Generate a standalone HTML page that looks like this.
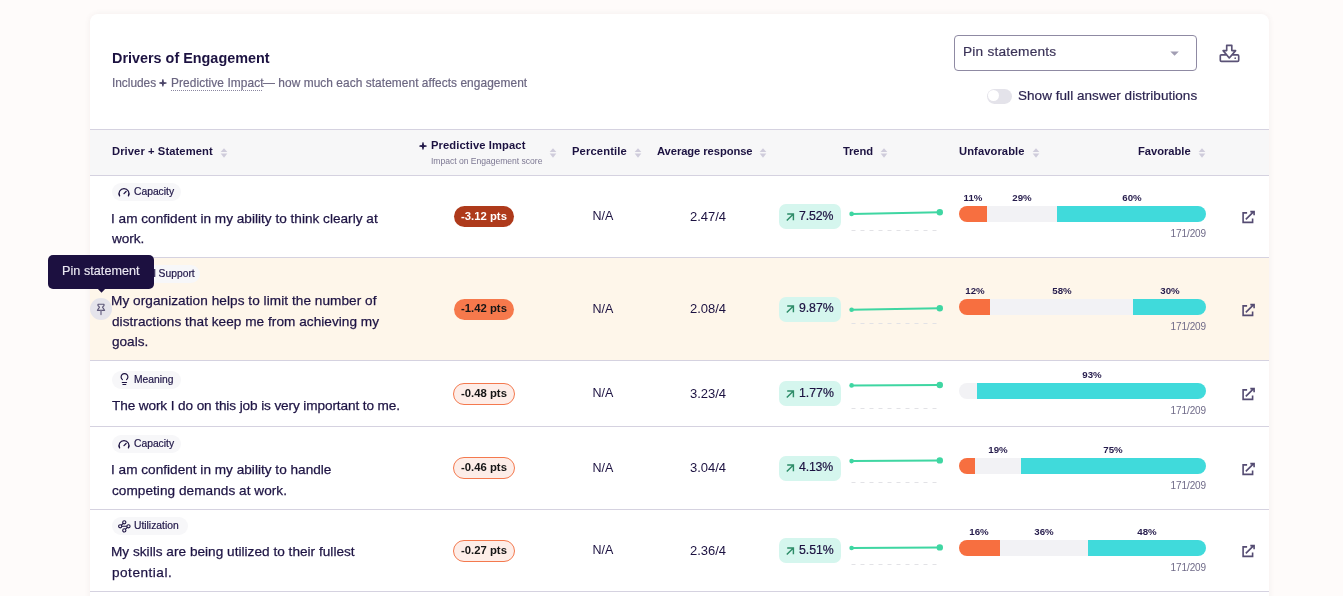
<!DOCTYPE html>
<html><head><meta charset="utf-8"><style>
html,body{margin:0;padding:0;}
body{width:1343px;height:596px;overflow:hidden;background:#fefbfa;position:relative;font-family:"Liberation Sans", sans-serif;}
.t{position:absolute;white-space:nowrap;line-height:1;will-change:transform;}
</style></head><body>
<div style="position:absolute;left:90px;top:14px;width:1179px;height:620px;background:#fff;border-radius:8px;box-shadow:0 0 5px 1px rgba(120,90,80,0.06);"></div>
<div class="t" style="left:111.70px;top:51.31px;font-size:14.4px;font-weight:700;color:#1c1241;letter-spacing:0.001px;">Drivers of Engagement</div>
<div class="t" style="left:111.59px;top:77.93px;font-size:11.9px;font-weight:400;color:#6b6681;letter-spacing:-0.022px;-webkit-text-stroke:0.2px #6b6681;">Includes</div>
<svg style="position:absolute;left:159px;top:79.2px" width="7.8" height="7.8" viewBox="0 0 10 10"><path d="M5 0 C5.8 0 6.1 2.6 6.3 3.7 C7.4 3.9 10 4.2 10 5 C10 5.8 7.4 6.1 6.3 6.3 C6.1 7.4 5.8 10 5 10 C4.2 10 3.9 7.4 3.7 6.3 C2.6 6.1 0 5.8 0 5 C0 4.2 2.6 3.9 3.7 3.7 C3.9 2.6 4.2 0 5 0Z" fill="#4b4468"/></svg>
<div class="t" style="left:170.50px;top:77.93px;font-size:11.9px;font-weight:400;color:#6b6681;letter-spacing:0.083px;-webkit-text-stroke:0.2px #6b6681;">Predictive Impact</div>
<div style="position:absolute;left:171px;top:89.5px;width:91px;height:0;border-top:1px dotted #8a86a0;"></div>
<div class="t" style="left:263.04px;top:77.93px;font-size:11.9px;font-weight:400;color:#6b6681;letter-spacing:0.060px;-webkit-text-stroke:0.2px #6b6681;">— how much each statement affects engagement</div>
<div style="position:absolute;left:954px;top:35px;width:241px;height:34px;border:1px solid #8f8aa3;border-radius:4px;background:#fff;"></div>
<div class="t" style="left:963.35px;top:44.90px;font-size:13.7px;font-weight:400;color:#3b3358;letter-spacing:0.206px;-webkit-text-stroke:0.2px #3b3358;">Pin statements</div>
<svg style="position:absolute;left:1170px;top:51px" width="10" height="6" viewBox="0 0 10 6"><path d="M0.3 0.5H8.8L4.55 4.8Z" fill="#a29eb3"/></svg>
<svg style="position:absolute;left:1219px;top:44px" width="21" height="19" viewBox="0 0 21 19"><path d="M7.7 1.3H12.8V6.6H16.6L10.3 14L4.1 6.6H7.7Z" fill="none" stroke="#5a5276" stroke-width="1.65" stroke-linejoin="round"/><path d="M7.3 10.9H2.4Q1.3 10.9 1.3 12V16.3Q1.3 17.4 2.4 17.4H18.6Q19.7 17.4 19.7 16.3V12Q19.7 10.9 18.6 10.9H13.3" fill="none" stroke="#5a5276" stroke-width="1.65" stroke-linejoin="round"/><circle cx="16.2" cy="14.2" r="0.85" fill="#5a5276"/></svg>
<div style="position:absolute;left:987px;top:89px;width:25px;height:14.8px;border-radius:7.4px;background:#e4e3ea;"></div>
<div style="position:absolute;left:987.8px;top:90px;width:11.4px;height:11.4px;border-radius:6px;background:#fff;"></div>
<div class="t" style="left:1018.29px;top:89.07px;font-size:13.5px;font-weight:400;color:#2c2450;letter-spacing:0.046px;-webkit-text-stroke:0.2px #2c2450;">Show full answer distributions</div>
<div style="position:absolute;left:90px;top:129px;width:1179px;height:1px;background:#d5d2e0;"></div>
<div style="position:absolute;left:90px;top:130px;width:1179px;height:45px;background:#f7f7f8;"></div>
<div style="position:absolute;left:90px;top:175px;width:1179px;height:1px;background:#d5d2e0;"></div>
<div class="t" style="left:111.65px;top:145.72px;font-size:11.2px;font-weight:700;color:#1c1241;letter-spacing:0.087px;">Driver + Statement</div>
<svg style="position:absolute;left:220px;top:148px" width="8" height="10" viewBox="0 0 8 10"><path d="M4 0.2L7.3 4H0.7Z" fill="#cfccdb"/><path d="M4 9.8L7.3 5.4H0.7Z" fill="#cfccdb"/></svg>
<svg style="position:absolute;left:419px;top:142px" width="8" height="8" viewBox="0 0 10 10"><path d="M5 0 C5.8 0 6.1 2.6 6.3 3.7 C7.4 3.9 10 4.2 10 5 C10 5.8 7.4 6.1 6.3 6.3 C6.1 7.4 5.8 10 5 10 C4.2 10 3.9 7.4 3.7 6.3 C2.6 6.1 0 5.8 0 5 C0 4.2 2.6 3.9 3.7 3.7 C3.9 2.6 4.2 0 5 0Z" fill="#241b4b"/></svg>
<div class="t" style="left:430.65px;top:139.82px;font-size:11.2px;font-weight:700;color:#1c1241;letter-spacing:0.109px;">Predictive Impact</div>
<div class="t" style="left:430.60px;top:156.72px;font-size:8.6px;font-weight:400;color:#7d7893;letter-spacing:-0.034px;">Impact on Engagement score</div>
<svg style="position:absolute;left:549px;top:148px" width="8" height="10" viewBox="0 0 8 10"><path d="M4 0.2L7.3 4H0.7Z" fill="#cfccdb"/><path d="M4 9.8L7.3 5.4H0.7Z" fill="#cfccdb"/></svg>
<div class="t" style="left:571.75px;top:145.72px;font-size:11.2px;font-weight:700;color:#1c1241;letter-spacing:0.140px;">Percentile</div>
<svg style="position:absolute;left:634px;top:148px" width="8" height="10" viewBox="0 0 8 10"><path d="M4 0.2L7.3 4H0.7Z" fill="#cfccdb"/><path d="M4 9.8L7.3 5.4H0.7Z" fill="#cfccdb"/></svg>
<div class="t" style="left:656.53px;top:145.72px;font-size:11.2px;font-weight:700;color:#1c1241;letter-spacing:-0.068px;">Average response</div>
<svg style="position:absolute;left:759px;top:148px" width="8" height="10" viewBox="0 0 8 10"><path d="M4 0.2L7.3 4H0.7Z" fill="#cfccdb"/><path d="M4 9.8L7.3 5.4H0.7Z" fill="#cfccdb"/></svg>
<div class="t" style="left:843.05px;top:145.72px;font-size:11.2px;font-weight:700;color:#1c1241;letter-spacing:-0.111px;">Trend</div>
<svg style="position:absolute;left:880px;top:148px" width="8" height="10" viewBox="0 0 8 10"><path d="M4 0.2L7.3 4H0.7Z" fill="#cfccdb"/><path d="M4 9.8L7.3 5.4H0.7Z" fill="#cfccdb"/></svg>
<div class="t" style="left:958.83px;top:145.72px;font-size:11.2px;font-weight:700;color:#1c1241;letter-spacing:0.080px;">Unfavorable</div>
<svg style="position:absolute;left:1032px;top:148px" width="8" height="10" viewBox="0 0 8 10"><path d="M4 0.2L7.3 4H0.7Z" fill="#cfccdb"/><path d="M4 9.8L7.3 5.4H0.7Z" fill="#cfccdb"/></svg>
<div class="t" style="left:1138.25px;top:145.72px;font-size:11.2px;font-weight:700;color:#1c1241;letter-spacing:-0.021px;">Favorable</div>
<svg style="position:absolute;left:1198px;top:148px" width="8" height="10" viewBox="0 0 8 10"><path d="M4 0.2L7.3 4H0.7Z" fill="#cfccdb"/><path d="M4 9.8L7.3 5.4H0.7Z" fill="#cfccdb"/></svg>
<div style="position:absolute;left:90px;top:257px;width:1179px;height:1px;background:#d5d2e0;"></div>
<div style="position:absolute;left:112px;top:183px;width:69px;height:18px;border-radius:9px;background:#f7f7f9;"></div>
<svg style="position:absolute;left:117.4px;top:186.5px" width="14" height="12" viewBox="0 0 14 12"><path d="M2.6 8.9A5 5 0 1 1 11.4 8.9" fill="none" stroke="#1c1241" stroke-width="1.25" stroke-linecap="round"/><path d="M7 6.6L9.1 4.5" stroke="#1c1241" stroke-width="1.25" stroke-linecap="round"/></svg>
<div class="t" style="left:134.34px;top:187.48px;font-size:10.3px;font-weight:400;color:#201748;-webkit-text-stroke:0.2px #201748;">Capacity</div>
<div class="t" style="left:111.23px;top:212.29px;font-size:13.6px;font-weight:400;color:#1e1444;letter-spacing:0.015px;-webkit-text-stroke:0.25px #1e1444;">I am confident in my ability to think clearly at</div>
<div class="t" style="left:112.37px;top:232.39px;font-size:13.6px;font-weight:400;color:#1e1444;letter-spacing:-0.060px;-webkit-text-stroke:0.25px #1e1444;">work.</div>
<div style="position:absolute;left:454px;top:206.0px;width:60px;height:21px;border-radius:11px;background:#ae3a1b;"></div>
<div class="t" style="left:334.00px;width:300px;text-align:center;top:210.63px;font-size:11.3px;font-weight:700;color:#fff;">-3.12 pts</div>
<div class="t" style="left:453.00px;width:300px;text-align:center;top:210.42px;font-size:12.5px;font-weight:400;color:#1c1241;">N/A</div>
<div class="t" style="left:557.50px;width:300px;text-align:center;top:209.50px;font-size:13px;font-weight:400;color:#1c1241;">2.47/4</div>
<div style="position:absolute;left:779px;top:204.0px;width:62px;height:25px;border-radius:7px;background:#d5f6ee;"></div>
<svg style="position:absolute;left:785px;top:211.5px" width="10" height="10" viewBox="0 0 10 10"><path d="M1.8 8.6L8.4 2M2.2 2H8.4V8.2" fill="none" stroke="#2d8c68" stroke-width="1.45"/></svg>
<div class="t" style="left:798.87px;top:209.69px;font-size:12.3px;font-weight:400;color:#1c1241;letter-spacing:-0.079px;-webkit-text-stroke:0.2px #1c1241;">7.52%</div>
<svg style="position:absolute;left:845px;top:200px" width="100" height="34" viewBox="0 0 100 34"><line x1="6.5" y1="30.5" x2="93" y2="30.5" stroke="#e2e2e6" stroke-width="1" stroke-dasharray="4 5"/><line x1="6.6" y1="13.900000000000006" x2="94.8" y2="12.300000000000011" stroke="#3fd6a2" stroke-width="2"/><circle cx="6.6" cy="13.900000000000006" r="2.3" fill="#3fd6a2"/><circle cx="94.8" cy="12.300000000000011" r="3.2" fill="#3fd6a2"/></svg>
<div style="position:absolute;left:959px;top:206px;width:247px;height:16px;border-radius:8px;overflow:hidden;"><div style="position:absolute;left:0;top:0;width:28px;height:16px;background:#f76f40"></div><div style="position:absolute;left:28px;top:0;width:70px;height:16px;background:#f2f2f5"></div><div style="position:absolute;left:98px;top:0;width:149px;height:16px;background:#40dadb"></div></div>
<div class="t" style="left:823.00px;width:300px;text-align:center;top:192.79px;font-size:9.7px;font-weight:700;color:#261c4c;">11%</div>
<div class="t" style="left:872.00px;width:300px;text-align:center;top:192.79px;font-size:9.7px;font-weight:700;color:#261c4c;">29%</div>
<div class="t" style="left:981.50px;width:300px;text-align:center;top:192.79px;font-size:9.7px;font-weight:700;color:#261c4c;">60%</div>
<div class="t" style="left:905.60px;width:300px;text-align:right;top:228.84px;font-size:10px;font-weight:400;color:#6f6a88;letter-spacing:-0.104px;">171/209</div>
<svg style="position:absolute;left:1241px;top:210.0px" width="15" height="15" viewBox="0 0 15 15"><path d="M6.1 2.9H2.1V12.4H11.6V8.6" fill="none" stroke="#544b72" stroke-width="1.6"/><path d="M4.8 9.4L12.4 1.9M9.3 1.6H13.1V5.3" fill="none" stroke="#544b72" stroke-width="1.6"/></svg>
<div style="position:absolute;left:90px;top:258px;width:1179px;height:102px;background:#fef6ea;"></div>
<div style="position:absolute;left:90px;top:360px;width:1179px;height:1px;background:#d5d2e0;"></div>
<div style="position:absolute;left:112px;top:265px;width:88px;height:18px;border-radius:9px;background:#f7f7f9;"></div>
<svg style="position:absolute;left:117.4px;top:268.5px" width="14" height="12" viewBox="0 0 14 12"><path d="M2.6 8.9A5 5 0 1 1 11.4 8.9" fill="none" stroke="#1c1241" stroke-width="1.25" stroke-linecap="round"/><path d="M7 6.6L9.1 4.5" stroke="#1c1241" stroke-width="1.25" stroke-linecap="round"/></svg>
<div class="t" style="left:134.34px;top:269.48px;font-size:10.3px;font-weight:400;color:#201748;-webkit-text-stroke:0.2px #201748;">Goal Support</div>
<div class="t" style="left:111.37px;top:294.49px;font-size:13.6px;font-weight:400;color:#1e1444;letter-spacing:0.060px;-webkit-text-stroke:0.25px #1e1444;">My organization helps to limit the number of</div>
<div class="t" style="left:111.88px;top:314.59px;font-size:13.6px;font-weight:400;color:#1e1444;letter-spacing:0.044px;-webkit-text-stroke:0.25px #1e1444;">distractions that keep me from achieving my</div>
<div class="t" style="left:111.89px;top:334.69px;font-size:13.6px;font-weight:400;color:#1e1444;letter-spacing:0.002px;-webkit-text-stroke:0.25px #1e1444;">goals.</div>
<div style="position:absolute;left:454px;top:298.5px;width:60px;height:21px;border-radius:11px;background:#f6794c;"></div>
<div class="t" style="left:334.00px;width:300px;text-align:center;top:303.13px;font-size:11.3px;font-weight:700;color:#161616;">-1.42 pts</div>
<div class="t" style="left:453.00px;width:300px;text-align:center;top:302.92px;font-size:12.5px;font-weight:400;color:#1c1241;">N/A</div>
<div class="t" style="left:557.50px;width:300px;text-align:center;top:302.00px;font-size:13px;font-weight:400;color:#1c1241;">2.08/4</div>
<div style="position:absolute;left:779px;top:296.5px;width:62px;height:25px;border-radius:7px;background:#d5f6ee;"></div>
<svg style="position:absolute;left:785px;top:304.0px" width="10" height="10" viewBox="0 0 10 10"><path d="M1.8 8.6L8.4 2M2.2 2H8.4V8.2" fill="none" stroke="#2d8c68" stroke-width="1.45"/></svg>
<div class="t" style="left:798.85px;top:302.19px;font-size:12.3px;font-weight:400;color:#1c1241;letter-spacing:-0.072px;-webkit-text-stroke:0.2px #1c1241;">9.87%</div>
<svg style="position:absolute;left:845px;top:293px" width="100" height="34" viewBox="0 0 100 34"><line x1="6.5" y1="30.5" x2="93" y2="30.5" stroke="#e2e2e6" stroke-width="1" stroke-dasharray="4 5"/><line x1="6.6" y1="16.80000000000001" x2="94.8" y2="15.199999999999989" stroke="#3fd6a2" stroke-width="2"/><circle cx="6.6" cy="16.80000000000001" r="2.3" fill="#3fd6a2"/><circle cx="94.8" cy="15.199999999999989" r="3.2" fill="#3fd6a2"/></svg>
<div style="position:absolute;left:959px;top:299px;width:247px;height:16px;border-radius:8px;overflow:hidden;"><div style="position:absolute;left:0;top:0;width:31px;height:16px;background:#f76f40"></div><div style="position:absolute;left:31px;top:0;width:143px;height:16px;background:#f2f2f5"></div><div style="position:absolute;left:174px;top:0;width:73px;height:16px;background:#40dadb"></div></div>
<div class="t" style="left:824.50px;width:300px;text-align:center;top:285.79px;font-size:9.7px;font-weight:700;color:#261c4c;">12%</div>
<div class="t" style="left:911.50px;width:300px;text-align:center;top:285.79px;font-size:9.7px;font-weight:700;color:#261c4c;">58%</div>
<div class="t" style="left:1019.50px;width:300px;text-align:center;top:285.79px;font-size:9.7px;font-weight:700;color:#261c4c;">30%</div>
<div class="t" style="left:905.60px;width:300px;text-align:right;top:321.84px;font-size:10px;font-weight:400;color:#6f6a88;letter-spacing:-0.104px;">171/209</div>
<svg style="position:absolute;left:1241px;top:302.5px" width="15" height="15" viewBox="0 0 15 15"><path d="M6.1 2.9H2.1V12.4H11.6V8.6" fill="none" stroke="#544b72" stroke-width="1.6"/><path d="M4.8 9.4L12.4 1.9M9.3 1.6H13.1V5.3" fill="none" stroke="#544b72" stroke-width="1.6"/></svg>
<div style="position:absolute;left:90px;top:426px;width:1179px;height:1px;background:#d5d2e0;"></div>
<div style="position:absolute;left:112px;top:371px;width:69px;height:18px;border-radius:9px;background:#f7f7f9;"></div>
<svg style="position:absolute;left:119px;top:371px" width="11" height="16" viewBox="0 0 11 16"><path d="M3.4 8.6A3.4 3.4 0 1 1 7.6 8.6" fill="none" stroke="#1c1241" stroke-width="1.2" stroke-linecap="round"/><path d="M3.3 11.5H7.5M3.9 13.5H6.8" stroke="#1c1241" stroke-width="1.2" stroke-linecap="round"/></svg>
<div class="t" style="left:134.06px;top:375.48px;font-size:10.3px;font-weight:400;color:#201748;-webkit-text-stroke:0.2px #201748;">Meaning</div>
<div class="t" style="left:112.17px;top:399.29px;font-size:13.6px;font-weight:400;color:#1e1444;letter-spacing:-0.105px;-webkit-text-stroke:0.25px #1e1444;">The work I do on this job is very important to me.</div>
<div style="position:absolute;left:453px;top:382.5px;width:60px;height:20px;border-radius:11px;background:#fdede8;border:1px solid #f4794e;"></div>
<div class="t" style="left:334.00px;width:300px;text-align:center;top:387.63px;font-size:11.3px;font-weight:700;color:#161616;">-0.48 pts</div>
<div class="t" style="left:453.00px;width:300px;text-align:center;top:387.42px;font-size:12.5px;font-weight:400;color:#1c1241;">N/A</div>
<div class="t" style="left:557.50px;width:300px;text-align:center;top:386.50px;font-size:13px;font-weight:400;color:#1c1241;">3.23/4</div>
<div style="position:absolute;left:779px;top:381.0px;width:62px;height:25px;border-radius:7px;background:#d5f6ee;"></div>
<svg style="position:absolute;left:785px;top:388.5px" width="10" height="10" viewBox="0 0 10 10"><path d="M1.8 8.6L8.4 2M2.2 2H8.4V8.2" fill="none" stroke="#2d8c68" stroke-width="1.45"/></svg>
<div class="t" style="left:798.56px;top:386.69px;font-size:12.3px;font-weight:400;color:#1c1241;letter-spacing:-0.001px;-webkit-text-stroke:0.2px #1c1241;">1.77%</div>
<svg style="position:absolute;left:845px;top:378px" width="100" height="34" viewBox="0 0 100 34"><line x1="6.5" y1="30.5" x2="93" y2="30.5" stroke="#e2e2e6" stroke-width="1" stroke-dasharray="4 5"/><line x1="6.6" y1="7.399999999999977" x2="94.8" y2="7.0" stroke="#3fd6a2" stroke-width="2"/><circle cx="6.6" cy="7.399999999999977" r="2.3" fill="#3fd6a2"/><circle cx="94.8" cy="7.0" r="3.2" fill="#3fd6a2"/></svg>
<div style="position:absolute;left:959px;top:383px;width:247px;height:16px;border-radius:8px;overflow:hidden;"><div style="position:absolute;left:0;top:0;width:0px;height:16px;background:#f76f40"></div><div style="position:absolute;left:0px;top:0;width:18px;height:16px;background:#f2f2f5"></div><div style="position:absolute;left:18px;top:0;width:229px;height:16px;background:#40dadb"></div></div>
<div class="t" style="left:941.50px;width:300px;text-align:center;top:369.79px;font-size:9.7px;font-weight:700;color:#261c4c;">93%</div>
<div class="t" style="left:905.60px;width:300px;text-align:right;top:405.84px;font-size:10px;font-weight:400;color:#6f6a88;letter-spacing:-0.104px;">171/209</div>
<svg style="position:absolute;left:1241px;top:387.0px" width="15" height="15" viewBox="0 0 15 15"><path d="M6.1 2.9H2.1V12.4H11.6V8.6" fill="none" stroke="#544b72" stroke-width="1.6"/><path d="M4.8 9.4L12.4 1.9M9.3 1.6H13.1V5.3" fill="none" stroke="#544b72" stroke-width="1.6"/></svg>
<div style="position:absolute;left:90px;top:509px;width:1179px;height:1px;background:#d5d2e0;"></div>
<div style="position:absolute;left:112px;top:435px;width:69px;height:18px;border-radius:9px;background:#f7f7f9;"></div>
<svg style="position:absolute;left:117.4px;top:438.5px" width="14" height="12" viewBox="0 0 14 12"><path d="M2.6 8.9A5 5 0 1 1 11.4 8.9" fill="none" stroke="#1c1241" stroke-width="1.25" stroke-linecap="round"/><path d="M7 6.6L9.1 4.5" stroke="#1c1241" stroke-width="1.25" stroke-linecap="round"/></svg>
<div class="t" style="left:134.34px;top:439.48px;font-size:10.3px;font-weight:400;color:#201748;-webkit-text-stroke:0.2px #201748;">Capacity</div>
<div class="t" style="left:111.23px;top:463.29px;font-size:13.6px;font-weight:400;color:#1e1444;letter-spacing:0.014px;-webkit-text-stroke:0.25px #1e1444;">I am confident in my ability to handle</div>
<div class="t" style="left:111.88px;top:484.09px;font-size:13.6px;font-weight:400;color:#1e1444;letter-spacing:0.048px;-webkit-text-stroke:0.25px #1e1444;">competing demands at work.</div>
<div style="position:absolute;left:453px;top:457.0px;width:60px;height:20px;border-radius:11px;background:#fdede8;border:1px solid #f4794e;"></div>
<div class="t" style="left:334.00px;width:300px;text-align:center;top:462.13px;font-size:11.3px;font-weight:700;color:#161616;">-0.46 pts</div>
<div class="t" style="left:453.00px;width:300px;text-align:center;top:461.92px;font-size:12.5px;font-weight:400;color:#1c1241;">N/A</div>
<div class="t" style="left:557.50px;width:300px;text-align:center;top:461.00px;font-size:13px;font-weight:400;color:#1c1241;">3.04/4</div>
<div style="position:absolute;left:779px;top:455.5px;width:62px;height:25px;border-radius:7px;background:#d5f6ee;"></div>
<svg style="position:absolute;left:785px;top:463.0px" width="10" height="10" viewBox="0 0 10 10"><path d="M1.8 8.6L8.4 2M2.2 2H8.4V8.2" fill="none" stroke="#2d8c68" stroke-width="1.45"/></svg>
<div class="t" style="left:799.20px;top:461.19px;font-size:12.3px;font-weight:400;color:#1c1241;letter-spacing:-0.161px;-webkit-text-stroke:0.2px #1c1241;">4.13%</div>
<svg style="position:absolute;left:845px;top:452px" width="100" height="34" viewBox="0 0 100 34"><line x1="6.5" y1="30.5" x2="93" y2="30.5" stroke="#e2e2e6" stroke-width="1" stroke-dasharray="4 5"/><line x1="6.6" y1="9.100000000000023" x2="94.8" y2="8.399999999999977" stroke="#3fd6a2" stroke-width="2"/><circle cx="6.6" cy="9.100000000000023" r="2.3" fill="#3fd6a2"/><circle cx="94.8" cy="8.399999999999977" r="3.2" fill="#3fd6a2"/></svg>
<div style="position:absolute;left:959px;top:458px;width:247px;height:16px;border-radius:8px;overflow:hidden;"><div style="position:absolute;left:0;top:0;width:16px;height:16px;background:#f76f40"></div><div style="position:absolute;left:16px;top:0;width:45.60000000000002px;height:16px;background:#f2f2f5"></div><div style="position:absolute;left:61.60000000000002px;top:0;width:185.39999999999998px;height:16px;background:#40dadb"></div></div>
<div class="t" style="left:847.80px;width:300px;text-align:center;top:444.79px;font-size:9.7px;font-weight:700;color:#261c4c;">19%</div>
<div class="t" style="left:963.30px;width:300px;text-align:center;top:444.79px;font-size:9.7px;font-weight:700;color:#261c4c;">75%</div>
<div class="t" style="left:905.60px;width:300px;text-align:right;top:480.84px;font-size:10px;font-weight:400;color:#6f6a88;letter-spacing:-0.104px;">171/209</div>
<svg style="position:absolute;left:1241px;top:461.5px" width="15" height="15" viewBox="0 0 15 15"><path d="M6.1 2.9H2.1V12.4H11.6V8.6" fill="none" stroke="#544b72" stroke-width="1.6"/><path d="M4.8 9.4L12.4 1.9M9.3 1.6H13.1V5.3" fill="none" stroke="#544b72" stroke-width="1.6"/></svg>
<div style="position:absolute;left:90px;top:591px;width:1179px;height:1px;background:#d5d2e0;"></div>
<div style="position:absolute;left:112px;top:517px;width:76px;height:18px;border-radius:9px;background:#f7f7f9;"></div>
<svg style="position:absolute;left:116px;top:518px" width="16" height="16" viewBox="0 0 16 16"><circle cx="8.3" cy="4.3" r="1.6" fill="none" stroke="#1c1241" stroke-width="1.1"/><circle cx="4.2" cy="8.3" r="1.6" fill="none" stroke="#1c1241" stroke-width="1.1"/><circle cx="12.5" cy="8.3" r="1.6" fill="none" stroke="#1c1241" stroke-width="1.1"/><circle cx="8.3" cy="12.4" r="1.6" fill="none" stroke="#1c1241" stroke-width="1.1"/><path d="M7.1 5.5L5.4 7.1M5.8 8.3H10.9M11.3 9.5L9.5 11.2" stroke="#1c1241" stroke-width="1.1"/></svg>
<div class="t" style="left:134.10px;top:521.48px;font-size:10.3px;font-weight:400;color:#201748;-webkit-text-stroke:0.2px #201748;">Utilization</div>
<div class="t" style="left:111.37px;top:545.29px;font-size:13.6px;font-weight:400;color:#1e1444;letter-spacing:0.025px;-webkit-text-stroke:0.25px #1e1444;">My skills are being utilized to their fullest</div>
<div class="t" style="left:111.59px;top:566.09px;font-size:13.6px;font-weight:400;color:#1e1444;letter-spacing:0.501px;-webkit-text-stroke:0.25px #1e1444;">potential.</div>
<div style="position:absolute;left:453px;top:539.5px;width:60px;height:20px;border-radius:11px;background:#fdede8;border:1px solid #f4794e;"></div>
<div class="t" style="left:334.00px;width:300px;text-align:center;top:544.63px;font-size:11.3px;font-weight:700;color:#161616;">-0.27 pts</div>
<div class="t" style="left:453.00px;width:300px;text-align:center;top:544.42px;font-size:12.5px;font-weight:400;color:#1c1241;">N/A</div>
<div class="t" style="left:557.50px;width:300px;text-align:center;top:543.50px;font-size:13px;font-weight:400;color:#1c1241;">2.36/4</div>
<div style="position:absolute;left:779px;top:538.0px;width:62px;height:25px;border-radius:7px;background:#d5f6ee;"></div>
<svg style="position:absolute;left:785px;top:545.5px" width="10" height="10" viewBox="0 0 10 10"><path d="M1.8 8.6L8.4 2M2.2 2H8.4V8.2" fill="none" stroke="#2d8c68" stroke-width="1.45"/></svg>
<div class="t" style="left:798.74px;top:543.69px;font-size:12.3px;font-weight:400;color:#1c1241;letter-spacing:-0.047px;-webkit-text-stroke:0.2px #1c1241;">5.51%</div>
<svg style="position:absolute;left:845px;top:534px" width="100" height="34" viewBox="0 0 100 34"><line x1="6.5" y1="30.5" x2="93" y2="30.5" stroke="#e2e2e6" stroke-width="1" stroke-dasharray="4 5"/><line x1="6.6" y1="14.0" x2="94.8" y2="13.399999999999977" stroke="#3fd6a2" stroke-width="2"/><circle cx="6.6" cy="14.0" r="2.3" fill="#3fd6a2"/><circle cx="94.8" cy="13.399999999999977" r="3.2" fill="#3fd6a2"/></svg>
<div style="position:absolute;left:959px;top:540px;width:247px;height:16px;border-radius:8px;overflow:hidden;"><div style="position:absolute;left:0;top:0;width:40.60000000000002px;height:16px;background:#f76f40"></div><div style="position:absolute;left:40.60000000000002px;top:0;width:88.39999999999998px;height:16px;background:#f2f2f5"></div><div style="position:absolute;left:129px;top:0;width:118px;height:16px;background:#40dadb"></div></div>
<div class="t" style="left:829.30px;width:300px;text-align:center;top:526.79px;font-size:9.7px;font-weight:700;color:#261c4c;">16%</div>
<div class="t" style="left:893.80px;width:300px;text-align:center;top:526.79px;font-size:9.7px;font-weight:700;color:#261c4c;">36%</div>
<div class="t" style="left:997.00px;width:300px;text-align:center;top:526.79px;font-size:9.7px;font-weight:700;color:#261c4c;">48%</div>
<div class="t" style="left:905.60px;width:300px;text-align:right;top:562.83px;font-size:10px;font-weight:400;color:#6f6a88;letter-spacing:-0.104px;">171/209</div>
<svg style="position:absolute;left:1241px;top:544.0px" width="15" height="15" viewBox="0 0 15 15"><path d="M6.1 2.9H2.1V12.4H11.6V8.6" fill="none" stroke="#544b72" stroke-width="1.6"/><path d="M4.8 9.4L12.4 1.9M9.3 1.6H13.1V5.3" fill="none" stroke="#544b72" stroke-width="1.6"/></svg>
<div style="position:absolute;left:90px;top:298px;width:22px;height:22px;border-radius:11px;background:#e5e4eb;"></div>
<svg style="position:absolute;left:93px;top:300px" width="16" height="18" viewBox="0 0 16 18"><path d="M5 4.2H11V5.6L9.5 7.1L11.6 10.3H4.4L6.5 7.1L5 5.6Z" fill="none" stroke="#5e5878" stroke-width="1.15" stroke-linejoin="round"/><path d="M8 10.5V14.5" stroke="#7a7492" stroke-width="1.4" stroke-linecap="round"/></svg>
<div style="position:absolute;left:48px;top:255px;width:106px;height:34px;border-radius:5px;background:#1c1040;"></div>
<svg style="position:absolute;left:97px;top:288px" width="9" height="5" viewBox="0 0 9 5"><path d="M0 0H9L4.5 4.8Z" fill="#1c1040"/></svg>
<div class="t" style="left:61.66px;top:264.53px;font-size:12.6px;font-weight:400;color:#ebe8f2;letter-spacing:0.050px;-webkit-text-stroke:0.15px #ebe8f2;">Pin statement</div>
</body></html>
